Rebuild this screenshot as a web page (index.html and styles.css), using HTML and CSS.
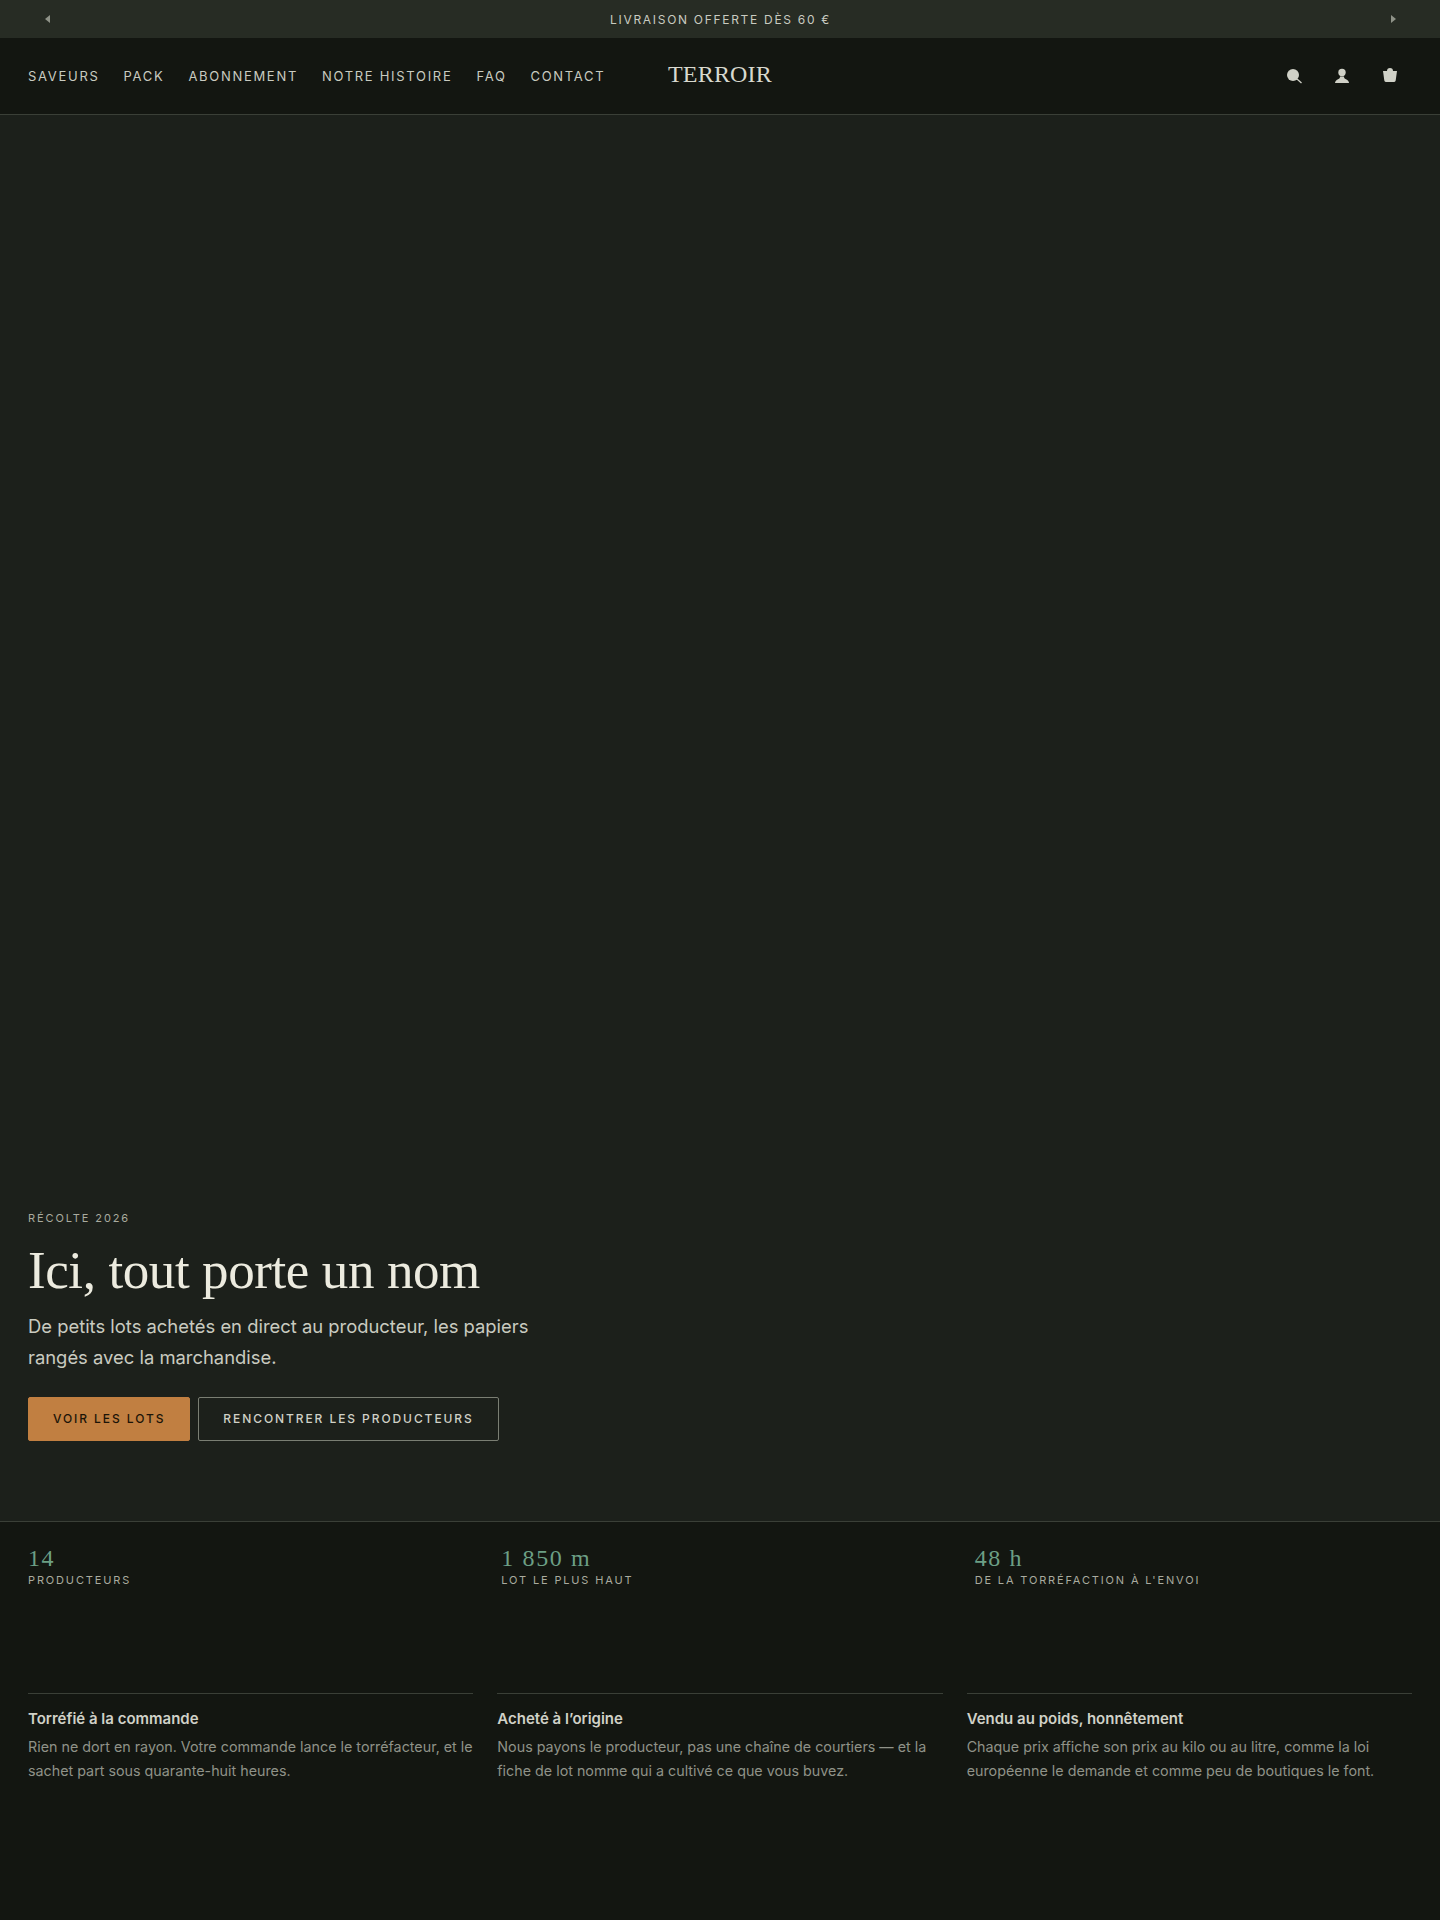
FILE: index.html
```html
<!DOCTYPE html>
<html lang="fr">
<head>
    <meta charset="UTF-8">
    <title>Terroir</title>
    <link rel="stylesheet" href="styles.css">
</head>
<body>
    <div class="topbar">
        <span class="arrow arrow-left"></span>
        <span class="topbar-text">LIVRAISON OFFERTE DÈS 60 €</span>
        <span class="arrow arrow-right"></span>
    </div>

    <header class="nav">
        <nav class="nav-links">
            <a href="#">SAVEURS</a>
            <a href="#">PACK</a>
            <a href="#">ABONNEMENT</a>
            <a href="#">NOTRE HISTOIRE</a>
            <a href="#">FAQ</a>
            <a href="#">CONTACT</a>
        </nav>
        <div class="logo">TERROIR</div>
        <div class="nav-icons">
            <svg class="icon" viewBox="0 0 16 16"><circle cx="7" cy="7" r="6"/><path class="handle" d="M11 11l4.500 4"/></svg>
            <svg class="icon" viewBox="0 0 16 16"><circle cx="8" cy="4.500" r="3.700"/><path d="M1 15c0-1.500 1-3 3-3.800 1.500-.6 2-1 2-2.700h4c0 1.700.5 2.100 2 2.700 2 .8 3 2.300 3 3.800z"/></svg>
            <svg class="icon" viewBox="0 0 16 16"><path d="M5 3a3 3 0 0 1 6 0h4l-1.300 9.500a2 2 0 0 1-2 1.500h-7.400a2 2 0 0 1-2-1.500l-1.300-9.500z"/></svg>
        </div>
    </header>

    <section class="hero">
        <div class="eyebrow">RÉCOLTE 2026</div>
        <h1>Ici, tout porte un nom</h1>
        <p class="lead">De petits lots achetés en direct au producteur, les papiers rangés avec la marchandise.</p>
        <div class="buttons">
            <a class="btn btn-primary" href="#">VOIR LES LOTS</a>
            <a class="btn btn-outline" href="#">RENCONTRER LES PRODUCTEURS</a>
        </div>
    </section>

    <section class="stats">
        <div class="stat">
            <div class="stat-value">14</div>
            <div class="stat-label">PRODUCTEURS</div>
        </div>
        <div class="stat">
            <div class="stat-value">1 850 m</div>
            <div class="stat-label">LOT LE PLUS HAUT</div>
        </div>
        <div class="stat">
            <div class="stat-value">48 h</div>
            <div class="stat-label">DE LA TORRÉFACTION À L'ENVOI</div>
        </div>
    </section>

    <section class="features">
        <div class="feature">
            <h3>Torréfié à la commande</h3>
            <p>Rien ne dort en rayon. Votre commande lance le torréfacteur, et le sachet part sous quarante-huit heures.</p>
        </div>
        <div class="feature">
            <h3>Acheté à l’origine</h3>
            <p>Nous payons le producteur, pas une chaîne de courtiers — et la fiche de lot nomme qui a cultivé ce que vous buvez.</p>
        </div>
        <div class="feature">
            <h3>Vendu au poids, honnêtement</h3>
            <p>Chaque prix affiche son prix au kilo ou au litre, comme la loi européenne le demande et comme peu de boutiques le font.</p>
        </div>
    </section>
</body>
</html>
```

FILE: styles.css
```css
body {
    font-family: "Inter", "Liberation Sans", sans-serif;
    background-color: #131611;
    color: #d0d1c7;
    margin: 0;
    padding: 0;
    height: 1920px;
}
a {
    color: inherit;
    text-decoration: none;
}
.topbar {
    display: flex;
    justify-content: space-between;
    align-items: center;
    height: 38px;
    padding: 0 44px 0 45px;
    background-color: #272c24;
    font-size: 12px;
    letter-spacing: 1.7px;
    color: #c9cbc0;
}
.arrow {
    width: 0;
    height: 0;
    border-top: 4.5px solid transparent;
    border-bottom: 4.5px solid transparent;
}
.arrow-left {
    border-right: 5px solid #8f9388;
}
.arrow-right {
    border-left: 5px solid #8f9388;
}
.nav {
    display: flex;
    justify-content: space-between;
    align-items: center;
    position: relative;
    height: 76px;
    padding: 0 28px;
    border-bottom: 1px solid #3a3f37;
}
.nav-links {
    display: flex;
    gap: 24px;
    font-size: 13px;
    letter-spacing: 1.7px;
    color: #c9cbc0;
}
.logo {
    position: absolute;
    left: 0;
    right: 0;
    top: 23px;
    text-align: center;
    font-family: "Liberation Serif", serif;
    font-size: 24px;
    letter-spacing: 0.2px;
    color: #d8d9cf;
}
.nav-icons {
    display: flex;
    gap: 32px;
    padding-right: 14px;
}
.icon {
    width: 16px;
    height: 16px;
    fill: #d0d1c7;
}
.icon .handle {
    fill: none;
    stroke: #d0d1c7;
    stroke-width: 1.3;
}
.hero {
    display: flex;
    flex-direction: column;
    justify-content: flex-end;
    align-items: flex-start;
    box-sizing: border-box;
    height: 1407px;
    padding: 0 28px 80px;
    background-color: #1c201b;
    border-bottom: 1px solid #3a3f37;
}
.eyebrow {
    font-size: 11px;
    letter-spacing: 1.9px;
    color: #a9ab9f;
}
h1 {
    margin: 14px 0 10px;
    font-family: "Liberation Serif", serif;
    font-size: 53px;
    font-weight: 400;
    letter-spacing: -0.4px;
    line-height: 62px;
    color: #ecebdf;
}
.lead {
    width: 520px;
    margin: 0 0 24px;
    font-size: 18.4px;
    line-height: 31px;
    color: #c9cbc0;
}
.buttons {
    display: flex;
    gap: 8px;
}
.btn {
    box-sizing: border-box;
    height: 44px;
    padding: 0 24px;
    line-height: 42px;
    font-size: 12px;
    font-weight: 500;
    letter-spacing: 1.92px;
    border: 1px solid #7a7e73;
    border-radius: 2px;
}
.btn-primary {
    background-color: #c17f41;
    border-color: #c17f41;
    color: #1c1408;
}
.btn-outline {
    color: #d0d1c7;
}
.stats {
    display: grid;
    grid-template-columns: repeat(3, 1fr);
    gap: 36px;
    padding: 22px 28px 0;
}
.stat-value {
    font-family: "Liberation Serif", serif;
    font-size: 24px;
    line-height: 28px;
    letter-spacing: 1.6px;
    color: #6c9f85;
}
.stat-label {
    margin-top: 1px;
    font-size: 11px;
    letter-spacing: 1.85px;
    color: #a9ab9f;
}
.features {
    display: grid;
    grid-template-columns: repeat(3, 1fr);
    gap: 24px;
    padding: 0 28px;
    margin-top: 106px;
}
.feature {
    border-top: 1px solid #3a3f37;
    padding-top: 15px;
}
.feature h3 {
    margin: 0 0 6px;
    font-size: 15px;
    font-weight: 600;
    line-height: 20px;
    color: #d0d1c7;
}
.feature p {
    margin: 0;
    font-size: 14.3px;
    line-height: 24px;
    color: #8f9288;
}
```
